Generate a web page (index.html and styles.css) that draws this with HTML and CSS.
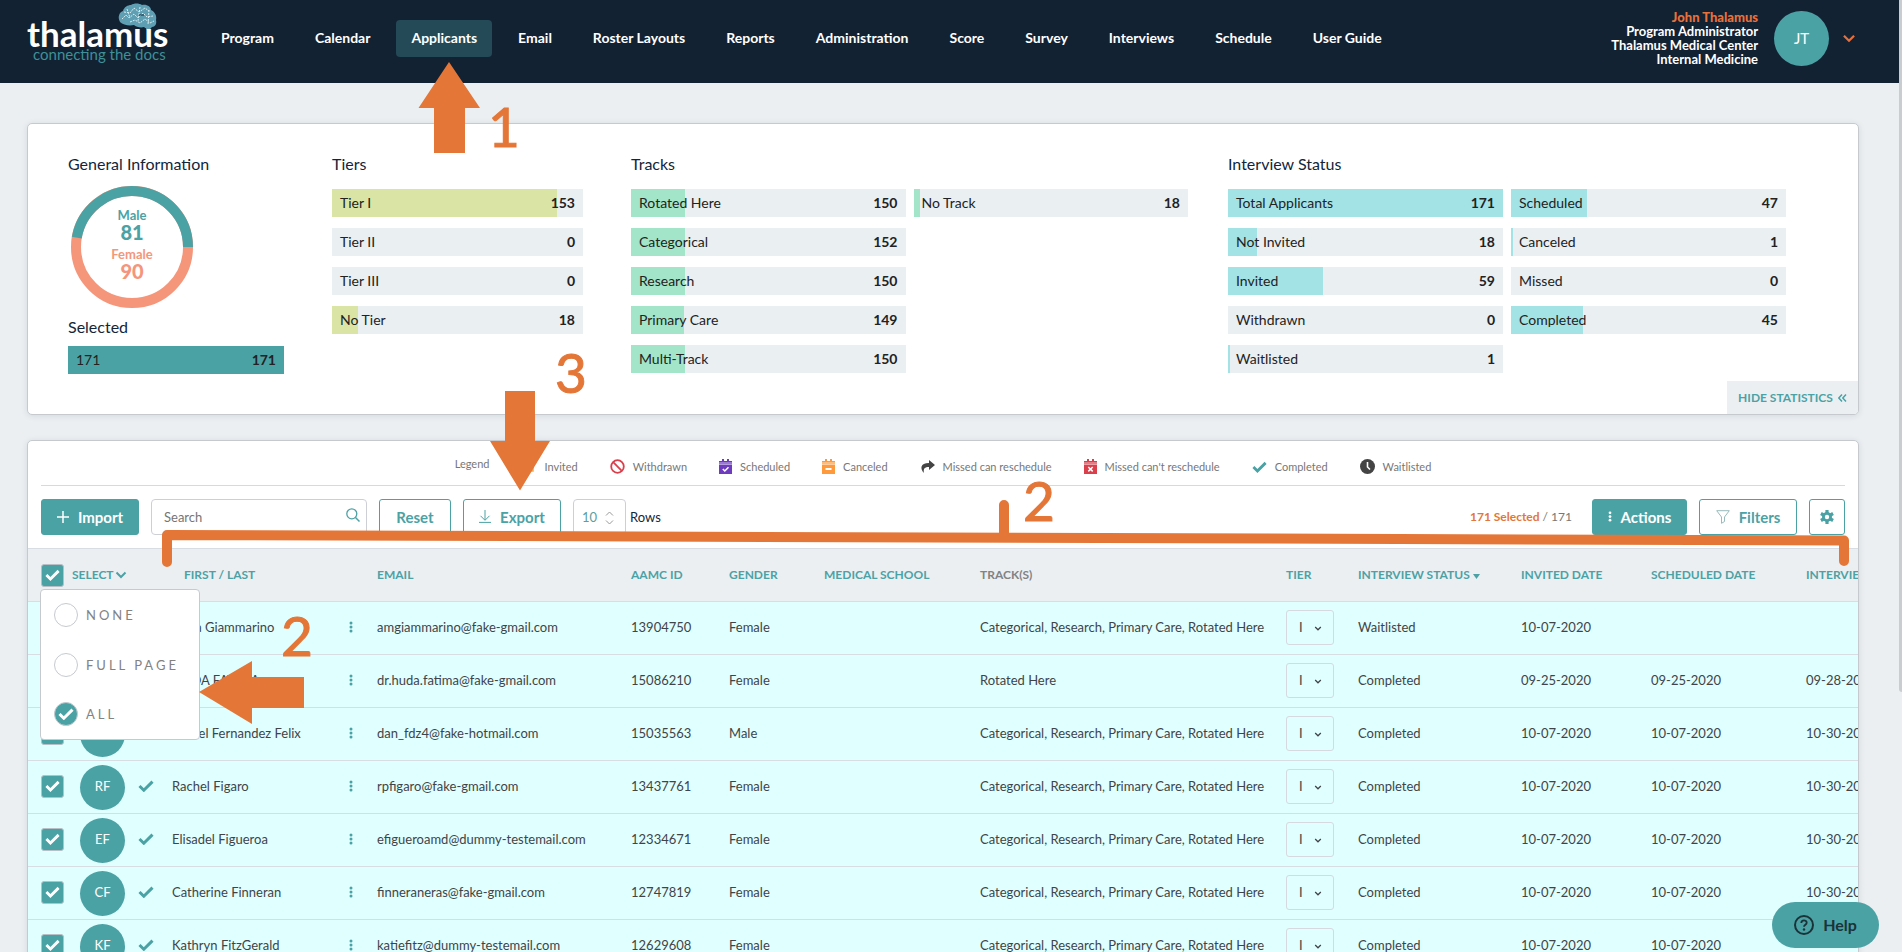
FILE: index.html
```html
<!DOCTYPE html>
<html lang="en">
<head>
<meta charset="utf-8">
<title>Thalamus - Applicants</title>
<link rel="stylesheet" href="styles.css">
</head>
<body>
<svg class="sprite" aria-hidden="true">
  <symbol id="check" viewBox="0 0 16 12"><path d="M1.5 6 5.8 10.2 14.5 1.6" fill="none" stroke="currentColor" stroke-width="3"/></symbol>
  <symbol id="dots" viewBox="0 0 4 12"><circle cx="2" cy="2" r="1.5"/><circle cx="2" cy="6" r="1.5"/><circle cx="2" cy="10" r="1.5"/></symbol>
  <symbol id="chevron" viewBox="0 0 12 8"><path d="M1.5 1.5 6 6 10.500 1.500" fill="none" stroke="currentColor" stroke-width="2"/></symbol>
</svg>

<header class="topbar">
  <a class="logo" href="#" aria-label="Thalamus, connecting the docs">
    <svg width="144" height="66" viewBox="0 0 144 66">
      <path d="M93 22c-3-6 0-10 3-11 1-4 5-6 8-6 3-2 8-2 11 0 5-1 9 2 9 5 4 2 6 6 5 10 1 4-1 7-4 7-2 3-6 2-8 0-3 1-8 0-10-2-5 1-11 0-14-3z" fill="#5f9fb3"/>
      <path d="M117 25l3 5h3l1-5z" fill="#5f9fb3"/>
      <path d="M95 19l4-4 3 3 5-4 4 4 5-5 4 4 6-1M97 12l6 1 4-5 5 4 6-4 4 3M103 22l5-2 5 3 5-4 5 4 4-2M100 9l3 9M113 7l-2 14M122 10l-1 15" fill="none" stroke="#d9eef2" stroke-dasharray="2 1"/>
      <path d="M112 15h5" stroke="#12263a" stroke-width="1"/>
      <text class="logo-name" x="0" y="47">thalamus</text>
      <text class="logo-tag" x="6" y="60">connecting the docs</text>
    </svg>
  </a>
  <nav class="nav">
    <a href="#">Program</a><a href="#">Calendar</a><a class="active" href="#">Applicants</a><a href="#">Email</a><a href="#">Roster Layouts</a><a href="#">Reports</a><a href="#">Administration</a><a href="#">Score</a><a href="#">Survey</a><a href="#">Interviews</a><a href="#">Schedule</a><a href="#">User Guide</a>
  </nav>
  <div class="user">
    <div class="user-info"><b>John Thalamus</b><span>Program Administrator</span><span>Thalamus Medical Center</span><span>Internal Medicine</span></div>
    <span class="user-avatar">JT</span>
    <button class="user-toggle" type="button" aria-label="Account menu"><svg width="14" height="9"><use href="#chevron"/></svg></button>
  </div>
</header>

<main class="page">
  <section class="card stats">
    <div class="stat narrow">
      <h2>General Information</h2>
      <div class="donut">
        <svg width="122" height="122" viewBox="0 0 122 122">
          <circle cx="61" cy="61" r="56" fill="none" stroke="#f5967a" stroke-width="10"/>
          <path d="M117 61A56 56 0 0 0 5.800 51.700" fill="none" stroke="#4ba2a5" stroke-width="10"/>
        </svg>
        <div class="donut-text"><span class="male">Male<b>81</b></span><span class="female">Female<b>90</b></span></div>
      </div>
      <h2 class="selected-title">Selected</h2>
      <div class="bar teal"><i style="width:100%"></i><span>171</span><b>171</b></div>
    </div>
    <div class="stat narrow">
      <h2>Tiers</h2>
      <div class="bars lime">
        <div class="bar"><i style="width:89.5%"></i><span>Tier I</span><b>153</b></div>
        <div class="bar"><span>Tier II</span><b>0</b></div>
        <div class="bar"><span>Tier III</span><b>0</b></div>
        <div class="bar"><i style="width:10.5%"></i><span>No Tier</span><b>18</b></div>
      </div>
    </div>
    <div class="stat">
      <h2>Tracks</h2>
      <div class="bars double green">
        <div class="bar"><i style="width:19.5%"></i><span>Rotated Here</span><b>150</b></div>
        <div class="bar"><i style="width:19.8%"></i><span>Categorical</span><b>152</b></div>
        <div class="bar"><i style="width:19.5%"></i><span>Research</span><b>150</b></div>
        <div class="bar"><i style="width:19.4%"></i><span>Primary Care</span><b>149</b></div>
        <div class="bar"><i style="width:19.5%"></i><span>Multi-Track</span><b>150</b></div>
        <div class="bar"><i style="width:2.3%"></i><span>No Track</span><b>18</b></div>
      </div>
    </div>
    <div class="stat">
      <h2>Interview Status</h2>
      <div class="bars double aqua">
        <div class="bar"><i style="width:100%"></i><span>Total Applicants</span><b>171</b></div>
        <div class="bar"><i style="width:10.5%"></i><span>Not Invited</span><b>18</b></div>
        <div class="bar"><i style="width:34.5%"></i><span>Invited</span><b>59</b></div>
        <div class="bar"><span>Withdrawn</span><b>0</b></div>
        <div class="bar"><i style="width:0.6%"></i><span>Waitlisted</span><b>1</b></div>
        <div class="bar"><i style="width:27.5%"></i><span>Scheduled</span><b>47</b></div>
        <div class="bar"><i style="width:0.6%"></i><span>Canceled</span><b>1</b></div>
        <div class="bar"><span>Missed</span><b>0</b></div>
        <div class="bar"><i style="width:26.3%"></i><span>Completed</span><b>45</b></div>
      </div>
    </div>
    <button class="hide-stats" type="button">HIDE STATISTICS
      <svg width="9" height="8" viewBox="0 0 9 8"><path d="M4 .5.800 4 4 7.500M8 .500 4.800 4 8 7.500" fill="none" stroke="currentColor" stroke-width="1.500"/></svg>
    </button>
  </section>

  <section class="card list">
    <div class="legend">
      <span class="legend-title">Legend</span>
      <span class="key"><svg width="15" height="15" viewBox="0 0 15 15"><path d="M3 3h9v9H3zM3 3l4.500 5L12 3" fill="none" stroke="#f0ad4e" stroke-width="1.500"/></svg>Invited</span>
      <span class="key"><svg width="15" height="15" viewBox="0 0 15 15"><circle cx="7.500" cy="7.500" r="6.300" fill="none" stroke="#dc3f4c" stroke-width="1.800"/><path d="M3.200 3.200l8.600 8.600" stroke="#dc3f4c" stroke-width="1.800"/></svg>Withdrawn</span>
      <span class="key"><svg width="13" height="15" viewBox="0 0 13 15"><path d="M3 0h2v2h3V0h2v2h3v3H0V2h3z" fill="#6f3cc0"/><path d="M0 4h13" stroke="#c9b5ea"/><path d="M0 5.500h13V15H0z" fill="#6f3cc0"/><path d="M3.800 10l2 2 3.700-3.700" fill="none" stroke="#fff" stroke-width="1.500"/></svg>Scheduled</span>
      <span class="key"><svg width="13" height="15" viewBox="0 0 13 15"><path d="M3 0h2v2h3V0h2v2h3v3H0V2h3z" fill="#ff9a3c"/><path d="M0 4h13" stroke="#ffdcb8"/><path d="M0 5.500h13V15H0z" fill="#ff9a3c"/><path d="M3.500 10h6" stroke="#fff" stroke-width="1.800"/></svg>Canceled</span>
      <span class="key"><svg width="15" height="15" viewBox="0 0 15 15"><path d="M9 1l6 5-6 5V8C5 8 3 9.500 4 14 0 10 0 4 9 4z" fill="#444"/></svg>Missed can reschedule</span>
      <span class="key"><svg width="13" height="15" viewBox="0 0 13 15"><path d="M3 0h2v2h3V0h2v2h3v3H0V2h3z" fill="#dc3f4c"/><path d="M0 4h13" stroke="#f3b5ba"/><path d="M0 5.500h13V15H0z" fill="#dc3f4c"/><path d="M4.300 8l4.400 4.400M8.700 8l-4.400 4.400" stroke="#fff" stroke-width="1.500"/></svg>Missed can't reschedule</span>
      <span class="key"><svg class="teal-text" width="15" height="12"><use href="#check"/></svg>Completed</span>
      <span class="key"><svg width="15" height="15" viewBox="0 0 15 15"><circle cx="7.500" cy="7.500" r="7.500" fill="#444"/><path d="M7.500 3v5l2.500 2.500" fill="none" stroke="#fff" stroke-width="1.600"/></svg>Waitlisted</span>
    </div>

    <div class="toolbar">
      <button class="btn solid import" type="button"><svg width="12" height="12" viewBox="0 0 12 12"><path d="M6 0v12M0 6h12" stroke="currentColor" stroke-width="1.500"/></svg>Import</button>
      <div class="search">
        <input type="text" placeholder="Search" aria-label="Search">
        <svg width="14" height="14" viewBox="0 0 14 14"><circle cx="5.800" cy="5.800" r="5" fill="none" stroke="#4ba2a5" stroke-width="1.300"/><path d="M9.500 9.500l4 4" stroke="#4ba2a5" stroke-width="1.500"/></svg>
      </div>
      <button class="btn reset" type="button">Reset</button>
      <button class="btn export" type="button"><svg width="12" height="13" viewBox="0 0 12 13"><path d="M6 0v10M1.500 5.800 6 10.300l4.500-4.500M0 12.400h12" fill="none" stroke="currentColor"/></svg>Export</button>
      <label class="rows"><span class="rows-box"><select><option>10</option><option>25</option><option>50</option></select><svg width="9" height="14" viewBox="0 0 9 14"><path d="M1 4.500 4.500 1 8 4.500M1 9.500 4.500 13 8 9.500" fill="none" stroke="#999"/></svg></span>Rows</label>
      <span class="count"><b>171 Selected</b> / 171</span>
      <button class="btn solid actions" type="button"><svg width="4" height="11" fill="#fff"><use href="#dots"/></svg>Actions</button>
      <button class="btn filters" type="button"><svg width="14" height="14" viewBox="0 0 14 14"><path d="M.7.700h12.600L8.500 7v4.500l-3 1.800V7z" fill="none" stroke="#9bb"/></svg>Filters</button>
      <button class="btn gear" type="button" aria-label="Settings"><svg width="14" height="14" viewBox="0 0 14 14"><g stroke="currentColor" stroke-width="3.200"><path d="M7 0v14M.94 3.500l12.120 7M.94 10.500l12.120-7"/></g><circle cx="7" cy="7" r="5" fill="currentColor"/><circle cx="7" cy="7" r="2.200" fill="#fff"/></svg></button>
    </div>

    <div class="table-wrap">
      <table class="grid">
        <colgroup><col class="c-check"><col class="c-avatar"><col class="c-state"><col class="c-name"><col class="c-menu"><col class="c-email"><col class="c-aamc"><col class="c-gender"><col class="c-school"><col class="c-track"><col class="c-tier"><col class="c-status"><col class="c-invited"><col class="c-sched"><col class="c-interview"></colgroup>
        <thead>
          <tr>
            <th colspan="3" class="select-head">
              <div class="select-line"><label class="box"><input type="checkbox" checked aria-label="Select applicants"><svg width="15" height="12"><use href="#check"/></svg></label><button type="button">SELECT<svg width="12" height="8"><use href="#chevron"/></svg></button></div>
              <div class="popup">
                <label class="radio"><input type="radio" name="sel"><svg width="16" height="12"><use href="#check"/></svg><span>NONE</span></label>
                <label class="radio"><input type="radio" name="sel"><svg width="16" height="12"><use href="#check"/></svg><span>FULL PAGE</span></label>
                <label class="radio"><input type="radio" name="sel" checked><svg width="16" height="12"><use href="#check"/></svg><span>ALL</span></label>
              </div>
            </th>
            <th colspan="2" class="name-head">FIRST / LAST</th><th>EMAIL</th><th>AAMC ID</th><th>GENDER</th><th>MEDICAL SCHOOL</th><th class="plain">TRACK(S)</th><th>TIER</th><th>INTERVIEW STATUS <svg width="7" height="5" viewBox="0 0 7 5"><path d="M0 0h7L3.500 5z" fill="currentColor"/></svg></th><th>INVITED DATE</th><th>SCHEDULED DATE</th><th>INTERVIEW DATE</th>
          </tr>
        </thead>
        <tbody>
          <tr><td class="first"><label class="box"><input type="checkbox" checked aria-label="Anna Giammarino"><svg width="15" height="12"><use href="#check"/></svg></label></td><td><span class="avatar">AG</span></td><td></td><td>Anna Giammarino</td><td><button class="menu" type="button" aria-label="Row menu"><svg width="4" height="12"><use href="#dots"/></svg></button></td><td>amgiammarino@fake-gmail.com</td><td>13904750</td><td>Female</td><td></td><td>Categorical, Research, Primary Care, Rotated Here</td><td><span class="tier"><select aria-label="Tier"><option>I</option></select><svg width="8" height="5"><use href="#chevron"/></svg></span></td><td>Waitlisted</td><td>10-07-2020</td><td></td><td></td></tr>
          <tr><td class="first"><label class="box"><input type="checkbox" checked aria-label="HUDA FATIMA"><svg width="15" height="12"><use href="#check"/></svg></label></td><td><span class="avatar">HF</span></td><td></td><td>HUDA FATIMA</td><td><button class="menu" type="button" aria-label="Row menu"><svg width="4" height="12"><use href="#dots"/></svg></button></td><td>dr.huda.fatima@fake-gmail.com</td><td>15086210</td><td>Female</td><td></td><td>Rotated Here</td><td><span class="tier"><select aria-label="Tier"><option>I</option></select><svg width="8" height="5"><use href="#chevron"/></svg></span></td><td>Completed</td><td>09-25-2020</td><td>09-25-2020</td><td>09-28-2020</td></tr>
          <tr><td class="first"><label class="box"><input type="checkbox" checked aria-label="Daniel Fernandez Felix"><svg width="15" height="12"><use href="#check"/></svg></label></td><td><span class="avatar">DF</span></td><td></td><td>Daniel Fernandez Felix</td><td><button class="menu" type="button" aria-label="Row menu"><svg width="4" height="12"><use href="#dots"/></svg></button></td><td>dan_fdz4@fake-hotmail.com</td><td>15035563</td><td>Male</td><td></td><td>Categorical, Research, Primary Care, Rotated Here</td><td><span class="tier"><select aria-label="Tier"><option>I</option></select><svg width="8" height="5"><use href="#chevron"/></svg></span></td><td>Completed</td><td>10-07-2020</td><td>10-07-2020</td><td>10-30-2020</td></tr>
          <tr><td class="first"><label class="box"><input type="checkbox" checked aria-label="Rachel Figaro"><svg width="15" height="12"><use href="#check"/></svg></label></td><td><span class="avatar">RF</span></td><td><svg class="state" width="16" height="12"><use href="#check"/></svg></td><td>Rachel Figaro</td><td><button class="menu" type="button" aria-label="Row menu"><svg width="4" height="12"><use href="#dots"/></svg></button></td><td>rpfigaro@fake-gmail.com</td><td>13437761</td><td>Female</td><td></td><td>Categorical, Research, Primary Care, Rotated Here</td><td><span class="tier"><select aria-label="Tier"><option>I</option></select><svg width="8" height="5"><use href="#chevron"/></svg></span></td><td>Completed</td><td>10-07-2020</td><td>10-07-2020</td><td>10-30-2020</td></tr>
          <tr><td class="first"><label class="box"><input type="checkbox" checked aria-label="Elisadel Figueroa"><svg width="15" height="12"><use href="#check"/></svg></label></td><td><span class="avatar">EF</span></td><td><svg class="state" width="16" height="12"><use href="#check"/></svg></td><td>Elisadel Figueroa</td><td><button class="menu" type="button" aria-label="Row menu"><svg width="4" height="12"><use href="#dots"/></svg></button></td><td>efigueroamd@dummy-testemail.com</td><td>12334671</td><td>Female</td><td></td><td>Categorical, Research, Primary Care, Rotated Here</td><td><span class="tier"><select aria-label="Tier"><option>I</option></select><svg width="8" height="5"><use href="#chevron"/></svg></span></td><td>Completed</td><td>10-07-2020</td><td>10-07-2020</td><td>10-30-2020</td></tr>
          <tr><td class="first"><label class="box"><input type="checkbox" checked aria-label="Catherine Finneran"><svg width="15" height="12"><use href="#check"/></svg></label></td><td><span class="avatar">CF</span></td><td><svg class="state" width="16" height="12"><use href="#check"/></svg></td><td>Catherine Finneran</td><td><button class="menu" type="button" aria-label="Row menu"><svg width="4" height="12"><use href="#dots"/></svg></button></td><td>finneraneras@fake-gmail.com</td><td>12747819</td><td>Female</td><td></td><td>Categorical, Research, Primary Care, Rotated Here</td><td><span class="tier"><select aria-label="Tier"><option>I</option></select><svg width="8" height="5"><use href="#chevron"/></svg></span></td><td>Completed</td><td>10-07-2020</td><td>10-07-2020</td><td>10-30-2020</td></tr>
          <tr><td class="first"><label class="box"><input type="checkbox" checked aria-label="Kathryn FitzGerald"><svg width="15" height="12"><use href="#check"/></svg></label></td><td><span class="avatar">KF</span></td><td><svg class="state" width="16" height="12"><use href="#check"/></svg></td><td>Kathryn FitzGerald</td><td><button class="menu" type="button" aria-label="Row menu"><svg width="4" height="12"><use href="#dots"/></svg></button></td><td>katiefitz@dummy-testemail.com</td><td>12629608</td><td>Female</td><td></td><td>Categorical, Research, Primary Care, Rotated Here</td><td><span class="tier"><select aria-label="Tier"><option>I</option></select><svg width="8" height="5"><use href="#chevron"/></svg></span></td><td>Completed</td><td>10-07-2020</td><td>10-07-2020</td><td></td></tr>
        </tbody>
      </table>
    </div>
  </section>
</main>

<button class="help" type="button"><svg width="20" height="20" viewBox="0 0 20 20"><circle cx="10" cy="10" r="9" fill="none" stroke="currentColor" stroke-width="2"/><path d="M7.300 8c0-3.600 5.400-3.400 5.400-.3 0 2-2.700 2-2.700 4.100" fill="none" stroke="currentColor" stroke-width="1.800"/><circle cx="10" cy="14.500" r="1.200" fill="currentColor"/></svg>Help</button>
<div class="scroll-thumb"></div>

<svg class="notes" width="1902" height="952" viewBox="0 0 1902 952">
  <path d="M449 62l31 46h-15v45h-31v-45h-15.500zM505 391h30v50h15l-30 49.500-30-49.500h15zM199 692l53-31v16h52v31h-52v16z"/>
  <path class="line" d="M167 562V535L1844 540.500V561M1004 505V537"/>
  <text x="488" y="147">1</text>
  <text x="281" y="656">2</text>
  <text x="1023" y="521">2</text>
  <text x="555" y="393">3</text>
</svg>
</body>
</html>
```
FILE: styles.css
```css
* { box-sizing: border-box; }
html { height: 100%; overflow: hidden; }
body {
  margin: 0;
  height: 100%;
  overflow: hidden;
  position: relative;
  padding-right: 3px;
  background: #ebeff2;
  color: #12263a;
  font: 13px/16px Lato, "Liberation Sans", sans-serif;
}
button, input, select { font: inherit; color: inherit; margin: 0; }
button { border: 0; padding: 0; background: none; cursor: pointer; }
a { color: inherit; text-decoration: none; }
svg { display: block; flex: none; }
.sprite { position: absolute; width: 0; height: 0; }
.teal-text { color: #4ba2a5; }

/* Top bar */
.topbar { display: flex; align-items: center; height: 83px; padding-left: 27px; padding-right: 43px; background: #122233; color: #fff; }
.logo { width: 144px; align-self: flex-start; }
.logo-name { font-size: 35px; font-weight: 700; fill: #fff; }
.logo-tag { font-size: 15px; fill: #3f9097; }
.nav { display: flex; gap: 11px; margin: 0 auto 6px 35px; font-size: 14px; font-weight: 700; white-space: nowrap; }
.nav a { height: 37px; padding: 0 15px; line-height: 36px; border-radius: 4px; }
.nav .active { background: #244a57; }
.user { display: flex; align-items: center; margin-bottom: 6px; }
.user-info { display: flex; flex-direction: column; padding-bottom: 2px; text-align: right; font-weight: 700; line-height: 14px; white-space: nowrap; }
.user-info b { color: #e8703a; }
.user-avatar { width: 55px; height: 55px; margin: 0 13px 0 16px; border-radius: 50%; background: #4ba2a5; font-size: 15px; line-height: 54px; text-align: center; }
.user-toggle { color: #e8703a; }

/* Cards */
.page { display: flex; flex-direction: column; gap: 25px; padding: 40px 40px 0 27px; }
.card { position: relative; background: #fff; border: 1px solid #c6cacf; border-radius: 5px; box-shadow: 0 1px 6px rgba(18, 38, 58, .1); overflow: hidden; }

/* Statistics */
.stats { display: grid; grid-template-columns: 224fr 259fr 557fr 558fr; gap: 40px; padding: 30px 72px 40px 40px; }
.narrow { padding-right: 8px; }
.stat h2 { margin: 0 0 15px; font-size: 16px; font-weight: 400; line-height: 20px; }
.stat .selected-title { margin: 9px 0; }
.donut { position: relative; width: 122px; margin: -3px 0 0 3px; }
.donut-text { position: absolute; inset: 0; display: flex; flex-direction: column; justify-content: center; gap: 5px; padding-bottom: 8px; text-align: center; font-weight: 700; }
.donut-text b { display: block; font-size: 20px; line-height: 18px; }
.male { color: #4ba2a5; }
.female { color: #f5967a; }
.bars { display: grid; grid-template-rows: repeat(4, 28px); gap: 11px 8px; }
.double { grid-template-rows: repeat(5, 28px); grid-auto-flow: column; grid-template-columns: 1fr 1fr; }
.bar { position: relative; display: flex; justify-content: space-between; height: 28px; padding: 0 8px; background: #eaeff2; color: #222; font-size: 14px; line-height: 27px; }
.bar i { position: absolute; left: 0; top: 0; bottom: 0; min-width: 2px; }
.bar span, .bar b { position: relative; }
.teal i { background: #4ba2a5; }
.lime i { background: #dae5a5; }
.green i { background: #a3e5c8; }
.aqua i { background: #a4e3e5; }
.hide-stats { position: absolute; right: 0; bottom: 0; display: flex; align-items: center; justify-content: center; gap: 5px; width: 131px; height: 33px; background: #ebeff2; color: #4ba2a5; font-size: 12px; font-weight: 700; }

/* Legend and toolbar */
.legend { display: flex; justify-content: center; align-items: center; gap: 32px; height: 45px; margin: 0 13px; padding-top: 7px; border-bottom: 1px solid #d6d9e0; color: #777; font-size: 11px; white-space: nowrap; }
.legend-title { padding-bottom: 5px; }
.key { display: flex; align-items: center; gap: 8px; }
.toolbar { display: flex; align-items: center; gap: 12px; height: 62px; padding: 0 13px; }
.btn { display: flex; align-items: center; justify-content: center; gap: 9px; height: 36px; padding-bottom: 1px; border: 1px solid #4ba2a5; border-radius: 3px; background: #fff; color: #4ba2a5; font-size: 15px; font-weight: 700; }
.solid { background: #4ba2a5; color: #fff; }
.import { width: 98px; }
.search { position: relative; width: 216px; }
.search input { width: 100%; height: 36px; padding: 0 36px 0 12px; border: 1px solid #ccd0d6; border-radius: 4px; background: #fff; }
.search input::placeholder { color: #757575; opacity: 1; }
.search svg { position: absolute; right: 7px; top: 9px; }
.reset { width: 72px; }
.export { width: 98px; }
.rows { display: flex; align-items: center; gap: 4px; }
.rows-box { position: relative; }
.rows select { appearance: none; width: 53px; height: 36px; padding: 0 8px; border: 1px solid #ccd0d6; border-radius: 4px; background: #fff; color: #5d9ea1; }
.rows-box svg { position: absolute; right: 12px; top: 12px; }
.count { margin-left: auto; padding-right: 8px; color: #777; font-size: 12px; }
.count b { color: #e47637; }
.actions { width: 95px; }
.filters { width: 98px; }
.gear { width: 36px; }

/* Applicants table */
.table-wrap { overflow: hidden; }
.grid { width: 1928px; table-layout: fixed; border-collapse: separate; border-spacing: 0; }
.grid th, .grid td { height: 53px; padding: 0; border-bottom: 1px solid #d8dde3; text-align: left; white-space: nowrap; }
.grid th { height: 54px; border-top: 1px solid #d8dde3; background: #ebeff2; color: #4ba2a5; font-size: 12px; font-weight: 700; }
.grid th.plain { color: #828282; }
.grid th svg { display: inline-block; }
.grid td { padding-bottom: 2px; background: #e0ffff; color: #404448; }
.c-check { width: 52px; }
.c-avatar { width: 58px; }
.c-state { width: 34px; }
.c-name { width: 177px; }
.c-menu { width: 28px; }
.c-email { width: 254px; }
.c-aamc { width: 98px; }
.c-gender { width: 95px; }
.c-school { width: 156px; }
.c-track { width: 306px; }
.c-tier { width: 72px; }
.c-status { width: 163px; }
.c-invited { width: 130px; }
.c-sched { width: 155px; }
.c-interview { width: 150px; }
.grid td.first { padding-left: 13px; }
.grid .select-head { position: relative; padding-left: 13px; }
.grid .name-head { padding-left: 12px; }
.select-line { display: flex; align-items: center; gap: 8px; }
.select-line button { display: flex; align-items: center; gap: 1px; }
.box { position: relative; display: block; width: 23px; height: 23px; }
.box input { appearance: none; display: block; width: 23px; height: 23px; border: 1px solid #b9bfc6; border-radius: 3px; background: #fff; }
.box input:checked { background: #4ba2a5; }
.box svg { position: absolute; left: 4px; top: 5px; color: #fff; }
.avatar { display: block; width: 45px; height: 45px; margin-top: 2px; border-radius: 50%; background: #4ba2a5; color: #fff; line-height: 43px; text-align: center; }
.state { color: #4ba2a5; }
.menu { display: block; fill: #4ba2a5; }
.tier { position: relative; display: block; width: 48px; }
.tier select { appearance: none; display: block; width: 48px; height: 35px; padding: 0 12px; border: 1px solid #d6d9e0; border-radius: 3px; background: transparent; }
.tier svg { position: absolute; right: 12px; top: 16px; }
.popup { position: absolute; z-index: 2; left: 12px; top: 40px; width: 160px; height: 151px; padding: 13px; display: flex; flex-direction: column; justify-content: space-between; background: #fff; border: 1px solid #c6cacf; border-radius: 4px; }
.radio { position: relative; display: flex; align-items: center; gap: 8px; color: #828282; font-size: 13px; font-weight: 400; letter-spacing: 3px; }
.radio input { appearance: none; display: block; width: 24px; height: 24px; border: 1px solid #c6cacf; border-radius: 50%; background: #fff; }
.radio input:checked { background: #4ba2a5; }
.grid .radio svg { position: absolute; left: 4px; top: 6px; color: #fff; }

/* Floating parts */
.help { position: fixed; z-index: 4; right: 23px; bottom: 4px; display: flex; align-items: center; justify-content: center; gap: 9px; width: 107px; height: 46px; border-radius: 23px; background: #4ba2a5; color: #1a3338; font-size: 16px; font-weight: 700; }
.scroll-thumb { position: fixed; top: 0; right: 0; width: 3px; height: 692px; border-radius: 0 0 0 3px; background: #c9cdd0; }
.notes { position: absolute; z-index: 3; left: 0; top: 0; pointer-events: none; fill: #e47637; font-size: 55px; }
.notes text { stroke: #e47637; stroke-width: 1; }
.notes .line { fill: none; stroke: #e47637; stroke-width: 10; stroke-linecap: round; stroke-linejoin: round; }
```
